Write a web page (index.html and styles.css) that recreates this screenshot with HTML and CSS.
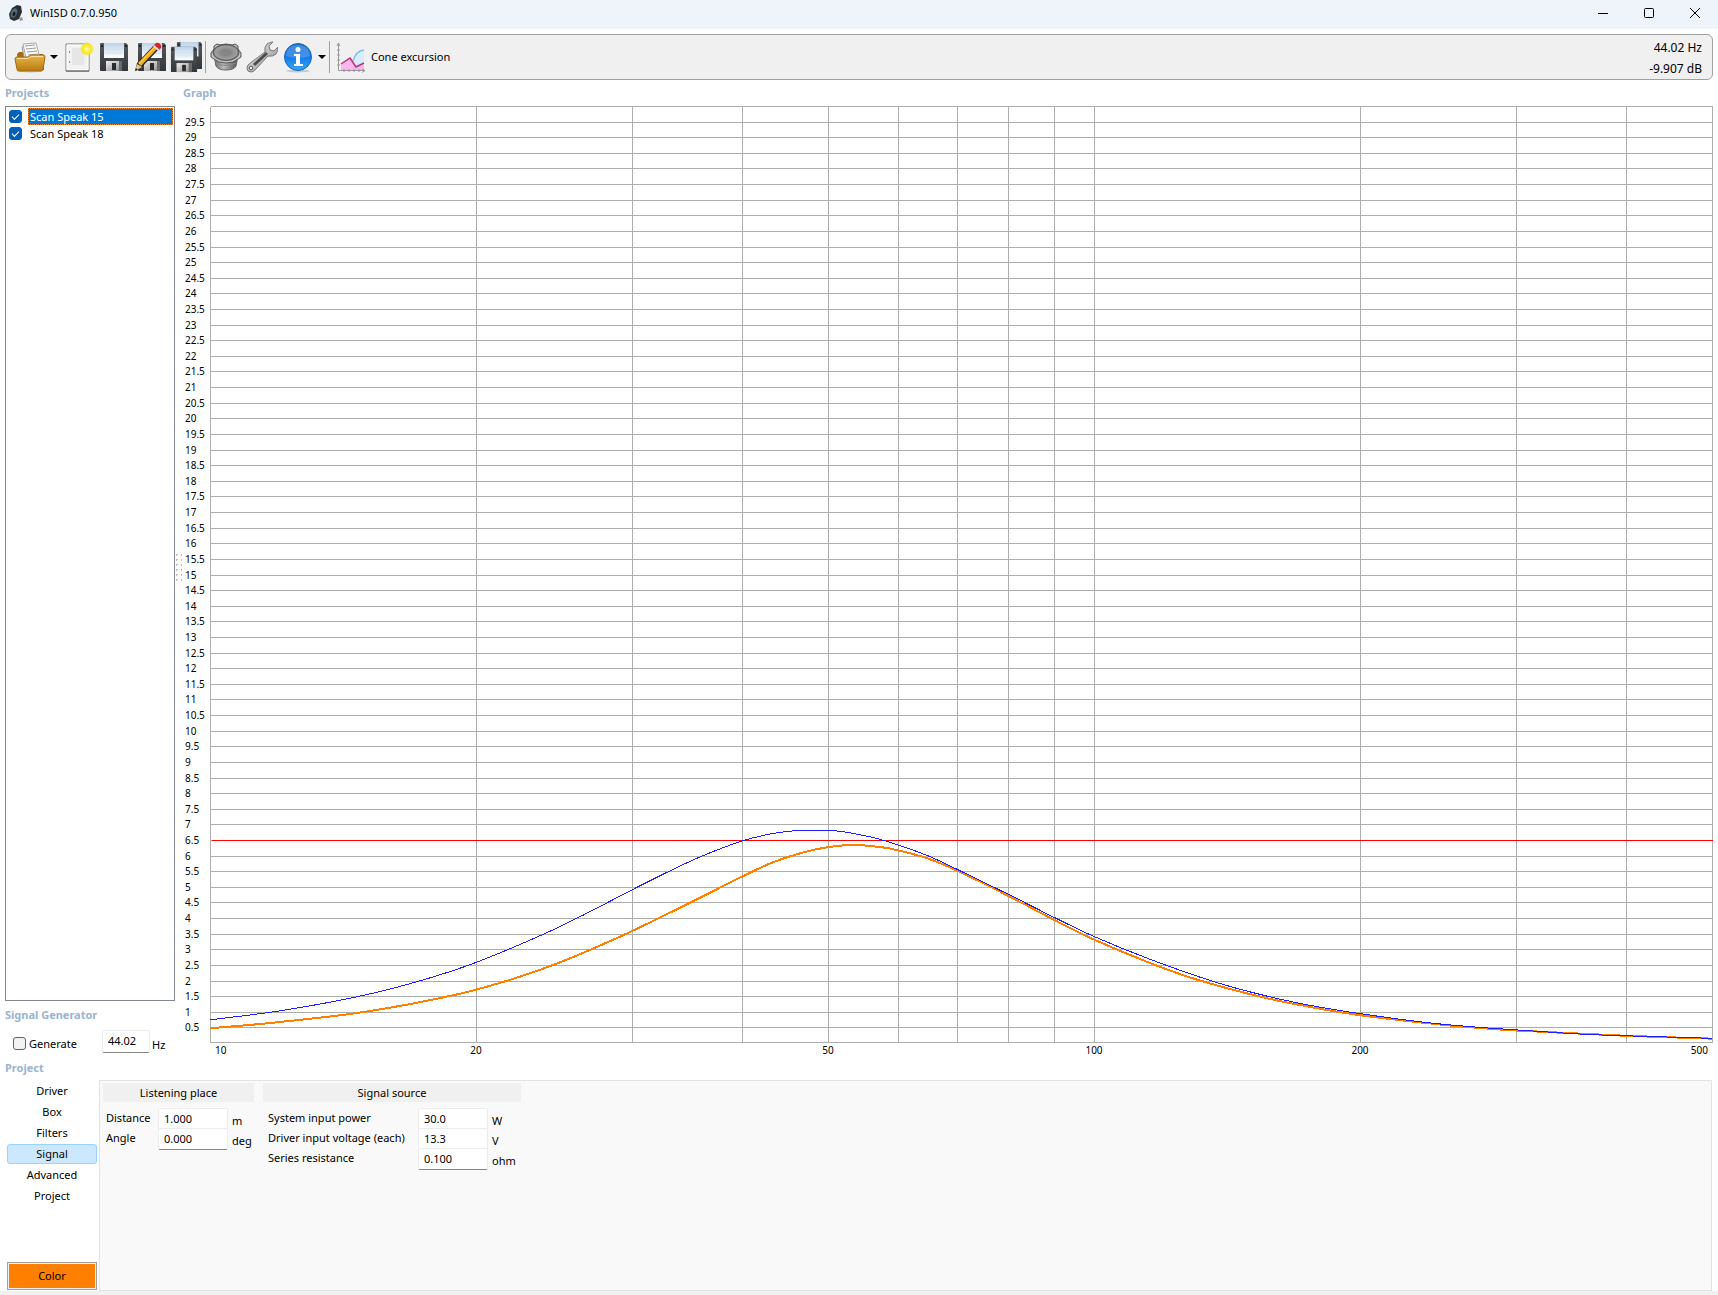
FILE: index.html
```html
<!DOCTYPE html>
<html lang="en">
<head>
    <meta charset="UTF-8">
    <meta name="viewport" content="width=device-width, initial-scale=1.0">
    <title>WinISD 0.7.0.950</title>
    <link rel="stylesheet" href="styles.css">
</head>
<body>
    <header class="titlebar">
        <svg class="app-icon" viewBox="0 0 16 16" width="16" height="16">
            <path d="M4 3 9 0l4 1 1 6-3 7-5 2-4-2-1-5z" fill="#2b2f33"/>
            <ellipse cx="6" cy="8" rx="3" ry="5" transform="rotate(20 6 8)" fill="#53697a"/>
            <ellipse cx="6" cy="9" rx="1.4" ry="2.2" transform="rotate(20 6 9)" fill="#14181b"/>
            <path d="M11 13l3-1 1 3-3 1z" fill="#999"/>
        </svg>
        <h1 class="title">WinISD 0.7.0.950</h1>
        <div class="window-buttons">
            <button type="button" aria-label="Minimize"><svg viewBox="0 0 12 12" width="12" height="12"><path d="M1 6.5h10"/></svg></button>
            <button type="button" aria-label="Maximize"><svg viewBox="0 0 12 12" width="12" height="12"><rect x="1.5" y="1.5" width="9" height="9" rx="1"/></svg></button>
            <button type="button" aria-label="Close"><svg viewBox="0 0 12 12" width="12" height="12"><path d="M1 1l10 10M11 1 1 11"/></svg></button>
        </div>
    </header>

    <div class="toolbar">
        <button type="button" class="tool" aria-label="Open">
            <svg viewBox="0 0 32 32" width="32" height="32">
                <defs>
                    <linearGradient id="folder" x1="0" y1="0" x2="0" y2="1"><stop offset="0" stop-color="#e9b64a"/><stop offset="1" stop-color="#b97a10"/></linearGradient>
                    <linearGradient id="label" x1="0" y1="0" x2="0" y2="1"><stop offset="0" stop-color="#b9d3ec"/><stop offset="1" stop-color="#fff"/></linearGradient>
                    <linearGradient id="body" x1="0" y1="0" x2="0" y2="1"><stop offset="0" stop-color="#555b60"/><stop offset="1" stop-color="#33363a"/></linearGradient>
                    <linearGradient id="metal" x1="0" y1="0" x2="1" y2="1"><stop offset="0" stop-color="#efefef"/><stop offset="1" stop-color="#8d8d8d"/></linearGradient>
                    <linearGradient id="basket" x1="0" y1="0" x2="1" y2="0"><stop offset="0" stop-color="#666"/><stop offset=".4" stop-color="#bbb"/><stop offset="1" stop-color="#4c4c4c"/></linearGradient>
                    <radialGradient id="cone"><stop offset="0" stop-color="#737373"/><stop offset="1" stop-color="#a2a2a2"/></radialGradient>
                    <linearGradient id="info" x1="0" y1="0" x2="0" y2="1"><stop offset="0" stop-color="#1d70d0"/><stop offset=".5" stop-color="#137be6"/><stop offset="1" stop-color="#3aa7f6"/></linearGradient>
                    <radialGradient id="glow"><stop offset="0" stop-color="#fff"/><stop offset=".35" stop-color="#fff04a"/><stop offset=".7" stop-color="#f8e71c"/><stop offset="1" stop-color="#f8e71c" stop-opacity="0"/></radialGradient>
                    <g id="floppy">
                        <path d="M2 2h25l2 2v26H2q-1 0-1-1V3q0-1 1-1z" fill="url(#body)"/>
                        <path d="M5 2h20v15H5z" fill="url(#label)"/>
                        <path d="M7 6h16M7 9h16M7 12h16" stroke="#d5e0ea"/>
                        <path d="M7 20h16v10H7z" fill="url(#metal)"/>
                        <path d="M13 22h4v7h-4z" fill="#282b2e"/>
                        <path d="M20 20h3v10h-3z" fill="#676b6e"/>
                        <path d="M2 4h2v2H2zM26 4h2v2h-2z" fill="#222"/>
                    </g>
                </defs>
                <ellipse cx="16" cy="30" rx="13" ry="1.5" fill="#c8c8c8"/>
                <path d="M3 13 5 11h5l1 2h17q2 0 2 2v14H4z" fill="#a96b0d"/>
                <path d="M8 6 18 4l4 14-11 3z" fill="#e8e8e8" stroke="#999"/>
                <path d="M9 3 22 2l4 15H12z" fill="#fafafa" stroke="#aaa"/>
                <path d="M11 5l10-1M12 8l10-1M13 11l10-1M14 14l10-1" stroke="#999"/>
                <path d="M1 18q0-2 2-2h11l3-2h12q2 0 2 2l-2 12q0 2-2 2H5q-2 0-2-2z" fill="url(#folder)" stroke="#a16a0c"/>
                <path d="M3 17.500h11l3-2h12" fill="none" stroke="#ffe0a0"/>
            </svg>
        </button>
        <button type="button" class="tool-arrow" aria-label="Recent projects"><svg viewBox="0 0 8 5" width="8" height="5"><path d="M0 0h8L4 4z"/></svg></button>
        <button type="button" class="tool" aria-label="New">
            <svg viewBox="0 0 32 32" width="32" height="32">
                <path d="M4 3h23v27H4z" fill="#f2f2f2" stroke="#777"/>
                <path d="M5 4h21v25H5z" fill="none" stroke="#fff"/>
                <path d="M10 7h12v17H10z" fill="#e6e6e6"/>
                <path d="M4 30h23" stroke="#555"/>
                <path d="M7 10h1v2H7zM7 20h1v2H7z" fill="#888"/>
                <circle cx="25" cy="8" r="7" fill="url(#glow)"/>
            </svg>
        </button>
        <button type="button" class="tool" aria-label="Save">
            <svg viewBox="0 0 32 32" width="32" height="32"><use href="#floppy" x="1"/></svg>
        </button>
        <button type="button" class="tool" aria-label="Save as">
            <svg viewBox="0 0 32 32" width="32" height="32">
                <use href="#floppy" x="3"/>
                <path d="M1 30l2-8L20 4l5 4L8 26z" fill="#262626"/>
                <path d="M4 22 20 5l3 3L7 25z" fill="#f7ad16"/>
                <path d="M5 23 21 6" stroke="#ffe066"/>
                <path d="M20 4l2-2q2-1 4 1t1 4l-2 2z" fill="#dc2424"/>
                <path d="M19 5l1-1 5 4-1 2z" fill="#ddd"/>
                <path d="M1 30l2-7 5 3z" fill="#e9c58d"/>
                <path d="M1 30l1-3 2 2z" fill="#222"/>
            </svg>
        </button>
        <button type="button" class="tool" aria-label="Save all">
            <svg viewBox="0 0 32 32" width="32" height="32">
                <svg x="6" y="-1" width="27" height="30" viewBox="0 0 30 31" preserveAspectRatio="none"><use href="#floppy"/></svg>
                <svg x="0" y="4" width="28" height="28" viewBox="0 0 30 31" preserveAspectRatio="none"><use href="#floppy"/></svg>
            </svg>
        </button>
        <span class="separator"></span>
        <button type="button" class="tool" aria-label="Driver database">
            <svg viewBox="0 0 32 32" width="32" height="32">
                <path d="M4 15h24l-2 10q-2 4-10 4T6 25z" fill="url(#basket)" stroke="#666"/>
                <path d="M6 22q10 5 20 0" fill="none" stroke="#888"/>
                <path d="M4 5l3-2 3 1q6-2 12 0l3-1 3 2v3l3 4v4l-3 2q-4 4-12 4T4 18l-3-2v-4l3-4z" fill="#c4c4c4" stroke="#555"/>
                <ellipse cx="16" cy="11.500" rx="13" ry="8" fill="#777" stroke="#555"/>
                <ellipse cx="16" cy="11.500" rx="11.500" ry="7" fill="url(#cone)"/>
                <ellipse cx="16" cy="12" rx="5" ry="3" fill="#858585"/>
            </svg>
        </button>
        <button type="button" class="tool" aria-label="Options">
            <svg viewBox="0 0 32 32" width="32" height="32">
                <path d="M1 27q0-2 2-4L19 11q-1-5 2-8 3-2 6-2l-4 4 1 4 4 1 4-4q0 4-2 7-3 3-8 2L9 29q-2 2-4 2-4 0-4-4z" fill="url(#metal)" stroke="#777"/>
                <path d="M8 24 21 12" stroke="#4c4c4c" stroke-width="3"/>
                <circle cx="5" cy="27" r="1.8" fill="#efefef" stroke="#555"/>
            </svg>
        </button>
        <button type="button" class="tool" aria-label="About">
            <svg viewBox="0 0 32 32" width="32" height="32">
                <ellipse cx="16" cy="30" rx="12" ry="1.5" fill="#c4cbd2"/>
                <circle cx="16" cy="16" r="13.5" fill="url(#info)" stroke="#1766bd"/>
                <path d="M4 15Q5 4 16 4t12 11q-11 4-24 0z" fill="#fff" opacity=".18"/>
                <circle cx="16" cy="8.500" r="2.500" fill="#fff"/>
                <path d="M12 13h6v10h3v2h-9v-2h2v-8h-2z" fill="#fff"/>
            </svg>
        </button>
        <button type="button" class="tool-arrow" aria-label="More"><svg viewBox="0 0 8 5" width="8" height="5"><path d="M0 0h8L4 4z"/></svg></button>
        <span class="separator"></span>
        <button type="button" class="tool graph-type">
            <svg viewBox="0 0 32 32" width="32" height="32">
                <path d="M18 25q3-14 11-15v16z" fill="#d6ebfb"/>
                <path d="M18 20q3-10 11-11" fill="none" stroke="#78bdf0" stroke-width="1.500"/>
                <path d="M6 23l9-6 6 9 8-4v7H6z" fill="#fbb6f0"/>
                <path d="M6 23l9-6 6 9 8-4" fill="none" stroke="#b8326e" stroke-width="1.500"/>
                <path d="M3.500 2v27.500H30M2 5l1.500-3L5 5M27 28l3 1.500-3 2M2 9h3M2 14h3M2 19h3M2 24h3M9 28v3M14 28v3M19 28v3M24 28v3" fill="none" stroke="#999"/>
            </svg>
            Cone excursion
        </button>
        <div class="readout">
            <div>44.02 Hz</div>
            <div>-9.907 dB</div>
        </div>
    </div>

    <main class="workspace">
        <aside class="sidebar">
            <h2 class="heading">Projects</h2>
            <ul class="projects">
                <li class="selected"><input type="checkbox" id="p15" checked><label for="p15">Scan Speak 15</label></li>
                <li><input type="checkbox" id="p18" checked><label for="p18">Scan Speak 18</label></li>
            </ul>
            <h2 class="heading">Signal Generator</h2>
            <div class="generator">
                <input type="checkbox" id="generate">
                <label for="generate">Generate</label>
                <input type="text" id="frequency" class="field" value="44.02" aria-label="Frequency">
                <span class="unit">Hz</span>
            </div>
        </aside>
        <div class="splitter"></div>
        <section class="graph">
            <h2 class="heading">Graph</h2>
            <div class="plot"><svg id="chart" role="img" aria-label="Cone excursion"></svg></div>
        </section>
    </main>

    <section class="project">
        <h2 class="heading">Project</h2>
        <div class="project-body">
            <nav class="tabs">
                <button type="button">Driver</button>
                <button type="button">Box</button>
                <button type="button">Filters</button>
                <button type="button" class="active">Signal</button>
                <button type="button">Advanced</button>
                <button type="button">Project</button>
                <button type="button" class="color">Color</button>
            </nav>
            <div class="panel">
                <fieldset class="group listening">
                    <h3>Listening place</h3>
                    <div class="row"><label for="distance">Distance</label><input type="text" id="distance" class="field" value="1.000"><span class="unit">m</span></div>
                    <div class="row"><label for="angle">Angle</label><input type="text" id="angle" class="field" value="0.000"><span class="unit">deg</span></div>
                </fieldset>
                <fieldset class="group source">
                    <h3>Signal source</h3>
                    <div class="row"><label for="power">System input power</label><input type="text" id="power" class="field" value="30.0"><span class="unit">W</span></div>
                    <div class="row"><label for="voltage">Driver input voltage (each)</label><input type="text" id="voltage" class="field" value="13.3"><span class="unit">V</span></div>
                    <div class="row"><label for="resistance">Series resistance</label><input type="text" id="resistance" class="field" value="0.100"><span class="unit">ohm</span></div>
                </fieldset>
            </div>
        </div>
    </section>
    <script src="chart.js"></script>
</body>
</html>
```
FILE: styles.css
```css
* {
    margin: 0;
    padding: 0;
    box-sizing: border-box;
}

body {
    display: flex;
    flex-direction: column;
    height: 100vh;
    background: #fff;
    border-bottom: 4px solid #f0f0f0;
    color: #000;
    font: 11px/16px "Noto Sans", "Open Sans", sans-serif;
}

button,
input {
    font: inherit;
    color: inherit;
}

button {
    border: none;
    background: none;
}

/* Title bar */
.titlebar {
    display: flex;
    align-items: center;
    flex: none;
    height: 29px;
    padding: 0 0 3px 8px;
    background: #eff3fa;
}

.title {
    margin-left: 6px;
    font-size: 11px;
    font-weight: normal;
}

.window-buttons {
    display: flex;
    margin-left: auto;
}

.window-buttons button {
    display: flex;
    align-items: center;
    justify-content: center;
    width: 46px;
    height: 26px;
}

.window-buttons svg {
    fill: none;
    stroke: #000;
}

/* Toolbar */
.toolbar {
    display: flex;
    align-items: center;
    flex: none;
    height: 46px;
    margin: 5px 5px 0;
    padding: 0 10px 0 6px;
    background: #f0f0f0;
    border: 1px solid #a0a0a0;
    border-radius: 6px;
}

.tool {
    display: flex;
    align-items: center;
    justify-content: center;
    width: 36px;
    height: 36px;
}

.tool-arrow {
    display: flex;
    align-items: center;
    justify-content: center;
    width: 12px;
    height: 36px;
}

.separator {
    width: 1px;
    height: 32px;
    margin: 0 2px 0 1px;
    background: #a0a0a0;
}

.graph-type {
    width: auto;
    gap: 4px;
    padding-left: 3px;
}

.readout {
    margin-left: auto;
    padding-top: 2px;
    font-size: 12px;
    line-height: 21px;
    text-align: right;
}

/* Projects and graph */
.workspace {
    display: flex;
    flex: 1;
    min-height: 0;
    padding: 4px 5px 0;
}

.heading {
    flex: none;
    height: 22px;
    color: #99b4d1;
    font-size: 11px;
    font-weight: bold;
    line-height: 18px;
}

.sidebar {
    display: flex;
    flex-direction: column;
    width: 170px;
}

.projects {
    flex: 1;
    margin-bottom: 5px;
    padding-top: 1px;
    border: 1px solid #828790;
    list-style: none;
}

.projects li {
    display: flex;
    align-items: center;
    gap: 6px;
    height: 17px;
    padding: 0 1px 0 3px;
}

.projects label {
    flex: 1;
    padding-left: 2px;
    line-height: 17px;
}

.projects .selected label {
    background: #0078d7;
    color: #fff;
    outline: 1px dotted #ff8728;
    outline-offset: -1px;
}

input[type="checkbox"] {
    display: flex;
    align-items: center;
    justify-content: center;
    appearance: none;
    width: 13px;
    height: 13px;
    background: #f3f3f3;
    border: 1px solid #626262;
    border-radius: 3px;
}

input[type="checkbox"]:checked {
    background: #005fb8;
    border-color: #005fb8;
}

input[type="checkbox"]:checked::before {
    content: "";
    width: 6px;
    height: 3px;
    margin-bottom: 2px;
    border: solid #fff;
    border-width: 0 0 1px 1px;
    transform: rotate(-45deg);
}

.generator {
    display: flex;
    align-items: center;
    height: 31px;
    padding-left: 8px;
}

.generator label {
    margin-left: 3px;
}

.generator .field {
    width: 48px;
    height: 23px;
    margin: 0 0 4px auto;
}

.generator .unit {
    width: 25px;
    padding: 2px 0 0 2px;
}

.field {
    width: 70px;
    height: 22px;
    padding: 0 5px 2px;
    background: #fff;
    border: 1px solid #ececec;
    border-bottom-color: #868686;
    border-radius: 2px;
    outline: none;
}

.unit {
    padding: 5px 0 0 4px;
}

.splitter {
    align-self: center;
    width: 8px;
    height: 30px;
    margin: 0 3px 10px -1px;
    background: radial-gradient(circle, #bbb 1px, transparent 1px) 0 0 / 5px 5px;
}

.graph {
    display: flex;
    flex-direction: column;
    flex: 1;
    min-width: 0;
    margin-left: -2px;
}

.plot {
    flex: 1;
    min-height: 0;
}

#chart {
    display: block;
    width: 100%;
    height: 100%;
    font-size: 10px;
    shape-rendering: crispEdges;
}

.grid {
    stroke: #aeaeae;
}

.limit {
    stroke: #f00;
}

.curve {
    fill: none;
}

.scan15 {
    stroke: #ff8000;
    stroke-width: 2;
}

.scan18 {
    stroke: #2020ff;
}

/* Project settings */
.project {
    flex: none;
    padding: 0 6px 0 5px;
}

.project .heading {
    height: 21px;
}

.project-body {
    display: flex;
    gap: 2px;
    height: 211px;
}

.tabs {
    display: flex;
    flex-direction: column;
    gap: 1px;
    width: 92px;
    padding: 1px 0 1px 2px;
}

.tabs button {
    height: 20px;
    border: 1px solid transparent;
    border-radius: 3px;
}

.tabs .active {
    background: #cce8ff;
    border-color: #99d1ff;
}

.tabs .color {
    height: 28px;
    margin-top: auto;
    background: #ff8000;
    border-color: #a0a0a0;
    border-radius: 0;
    box-shadow: inset 0 0 0 1px #f0f0f0;
}

.panel {
    display: flex;
    align-items: flex-start;
    flex: 1;
    gap: 9px;
    padding: 2px 3px;
    background: #f9f9f9;
    border: 1px solid #e3e3e3;
}

.group {
    border: none;
}

.listening {
    width: 151px;
}

.source {
    width: 258px;
}

.group h3 {
    height: 19px;
    margin-bottom: 6px;
    background: #f0f0f0;
    font-size: 11px;
    font-weight: normal;
    line-height: 19px;
    text-align: center;
}

.row {
    display: grid;
    grid-template-columns: 1fr 70px 26px;
    height: 20px;
    padding-left: 3px;
}

.source .row {
    grid-template-columns: 1fr 70px 33px;
    padding-left: 5px;
}

.row label {
    line-height: 20px;
}
```
FILE: chart.js
```js
// Cone excursion in mm against frequency in Hz
var scan15 = [
    [10, 0.47], [11.69, 0.64], [14.91, 0.99], [18.85, 1.53], [21.66, 1.99], [24.56, 2.52],
    [27.26, 3.05], [30, 3.58], [34.91, 4.49], [40, 5.33], [43.37, 5.79], [46.89, 6.1],
    [50, 6.27], [53.65, 6.34], [57.76, 6.26], [60, 6.17], [64.67, 5.92], [70, 5.52],
    [80, 4.71], [90, 3.95], [100, 3.31], [115.7, 2.56], [130.7, 2.03], [154.9, 1.47],
    [176.7, 1.14], [200, 0.89], [232.2, 0.67], [257.6, 0.54], [300, 0.4], [400, 0.23], [500, 0.14]
];
var scan18 = [
    [10, 0.74], [12, 1.03], [14.72, 1.49], [17.28, 1.99], [20, 2.58],
    [23.82, 3.48], [26.5, 4.11], [30, 4.9], [33.13, 5.51], [35.99, 5.98], [40, 6.47],
    [43.18, 6.7], [46.09, 6.8], [50, 6.81], [52.95, 6.73], [57.76, 6.49], [64.67, 6.01],
    [70, 5.56], [80, 4.76], [90, 4.03], [100, 3.41], [115.7, 2.68], [136.4, 1.97],
    [156.4, 1.51], [176.7, 1.19], [200, 0.94], [236.7, 0.66], [270.1, 0.51], [300, 0.42],
    [358.3, 0.28], [400, 0.23], [500, 0.15]
];
var chart = document.getElementById("chart");
var left = 27;
var bottomSpace = 16;

function add(name, attributes, text) {
    var node = document.createElementNS("http://www.w3.org/2000/svg", name);
    for (var key in attributes) {
        node.setAttribute(key, attributes[key]);
    }
    if (text !== undefined) {
        node.textContent = text;
    }
    chart.appendChild(node);
}

function draw() {
    var width = chart.clientWidth - left - 1;
    var height = chart.clientHeight - bottomSpace;
    chart.textContent = "";

    function x(f) {
        return left + width * Math.log(f / 10) / Math.log(50);
    }
    function y(mm) {
        return height - height * mm / 30;
    }
    function line(x1, y1, x2, y2, cls) {
        add("line", { x1: x1 + 0.5, y1: y1 + 0.5, x2: x2 + 0.5, y2: y2 + 0.5, "class": cls });
    }
    // Smooth path through the points (Catmull-Rom)
    function curve(points, cls) {
        var p = points.map(function (q) { return [x(q[0]), y(q[1])]; });
        var d = "M" + p[0];
        for (var i = 0; i < p.length - 1; i++) {
            var a = p[i - 1] || p[i], b = p[i], c = p[i + 1], e = p[i + 2] || c;
            var h = (c[0] - b[0]) / 3;
            var s1 = (c[1] - a[1]) / (c[0] - a[0]);
            var s2 = (e[1] - b[1]) / (e[0] - b[0]);
            d += "C" + [b[0] + h, b[1] + h * s1, c[0] - h, c[1] - h * s2, c[0], c[1]];
        }
        add("path", { d: d, "class": "curve " + cls });
    }

    for (var k = 0; k <= 60; k++) {
        var gy = k === 0 ? height - 1 : Math.round(y(k / 2));
        line(left, gy, left + width, gy, "grid");
        if (k > 0 && k < 60) {
            add("text", { x: 2, y: gy + 4 }, k / 2);
        }
    }
    [10, 20, 30, 40, 50, 60, 70, 80, 90, 100, 200, 300, 400, 500].forEach(function (f) {
        var gx = Math.round(x(f));
        line(gx, 0, gx, height - 1, "grid");
    });
    [20, 50, 100, 200].forEach(function (f) {
        add("text", { x: Math.round(x(f)), y: height + 11, "text-anchor": "middle" }, f);
    });
    add("text", { x: left + 5, y: height + 11 }, 10);
    add("text", { x: left + width - 4, y: height + 11, "text-anchor": "end" }, 500);

    line(left + 1, Math.round(y(6.5)), left + width, Math.round(y(6.5)), "limit");
    curve(scan15, "scan15");
    curve(scan18, "scan18");
}

draw();
window.addEventListener("resize", draw);
```
